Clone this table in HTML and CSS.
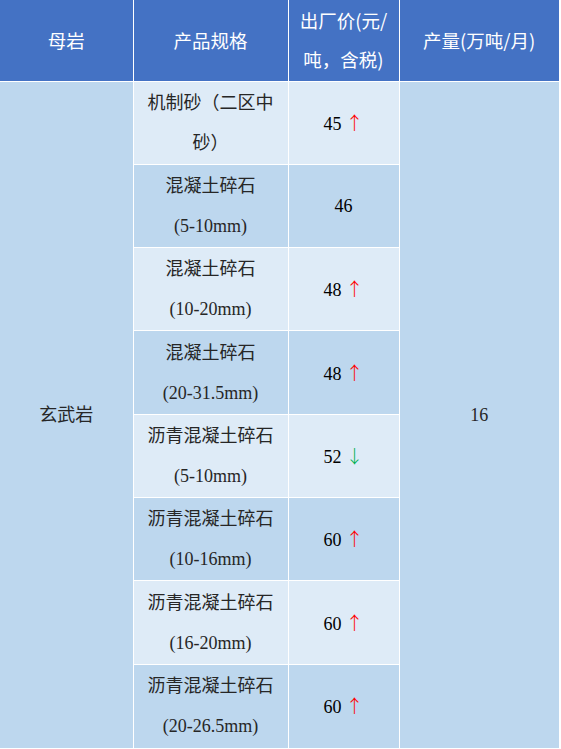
FILE: index.html
```html
<!DOCTYPE html>
<html lang="zh-CN">
<head>
<meta charset="utf-8">
<title>价格表</title>
<link rel="stylesheet" href="styles.css">
</head>
<body>
<table class="price-table">
  <colgroup>
    <col class="c1">
    <col class="c2">
    <col class="c3">
    <col class="c4">
  </colgroup>
  <thead>
    <tr>
      <th>母岩</th>
      <th>产品规格</th>
      <th>出厂价(元/<br>吨，含税)</th>
      <th>产量(万吨/月)</th>
    </tr>
  </thead>
  <tbody>
    <tr class="light">
      <td class="merged" rowspan="8">玄武岩</td>
      <td class="spec">机制砂（二区中<br>砂）</td>
      <td class="price">45<span class="up">↑</span></td>
      <td class="merged" rowspan="8">16</td>
    </tr>
    <tr class="dark">
      <td class="spec">混凝土碎石<br>(5-10mm)</td>
      <td class="price">46</td>
    </tr>
    <tr class="light">
      <td class="spec">混凝土碎石<br>(10-20mm)</td>
      <td class="price">48<span class="up">↑</span></td>
    </tr>
    <tr class="dark">
      <td class="spec">混凝土碎石<br>(20-31.5mm)</td>
      <td class="price">48<span class="up">↑</span></td>
    </tr>
    <tr class="light">
      <td class="spec">沥青混凝土碎石<br>(5-10mm)</td>
      <td class="price">52<span class="down">↓</span></td>
    </tr>
    <tr class="dark">
      <td class="spec">沥青混凝土碎石<br>(10-16mm)</td>
      <td class="price">60<span class="up">↑</span></td>
    </tr>
    <tr class="light">
      <td class="spec">沥青混凝土碎石<br>(16-20mm)</td>
      <td class="price">60<span class="up">↑</span></td>
    </tr>
    <tr class="dark">
      <td class="spec">沥青混凝土碎石<br>(20-26.5mm)</td>
      <td class="price">60<span class="up">↑</span></td>
    </tr>
  </tbody>
</table>
</body>
</html>
```

FILE: styles.css
```css
html, body {
  margin: 0;
  padding: 0;
  background: #ffffff;
}

.price-table {
  border-collapse: collapse;
  border-style: hidden;
  table-layout: fixed;
  width: 559px;
}

.c1 { width: 133px; }
.c2 { width: 155px; }
.c3 { width: 111px; }
.c4 { width: 160px; }

.price-table th,
.price-table td {
  border: 1px solid #ffffff;
  padding: 0 6px;
  text-align: center;
  vertical-align: middle;
}

.price-table thead tr {
  height: 81px;
}

.price-table th {
  background: #4472c4;
  color: #ffffff;
  font-family: "Noto Sans CJK SC", sans-serif;
  font-weight: 400;
  font-size: 18.5px;
  line-height: 39px;
}

.price-table tbody tr {
  height: 83.33px;
}

.price-table td {
  font-family: "Liberation Serif", "Noto Sans CJK SC", serif;
  font-size: 18px;
  line-height: 40px;
  color: #000000;
}

.price-table tr.light td {
  background: #deebf7;
}

.price-table tr.dark td {
  background: #bdd7ee;
}

.price-table tr td.merged {
  background: #bdd7ee;
  color: #262626;
}

.price-table td.spec {
  color: #262626;
}

.up,
.down {
  font-family: "Noto Sans CJK SC", sans-serif;
  font-size: 18px;
  font-weight: 300;
  margin-left: 4px;
}

.up {
  color: #ff0000;
}

.down {
  color: #00b050;
}
```
